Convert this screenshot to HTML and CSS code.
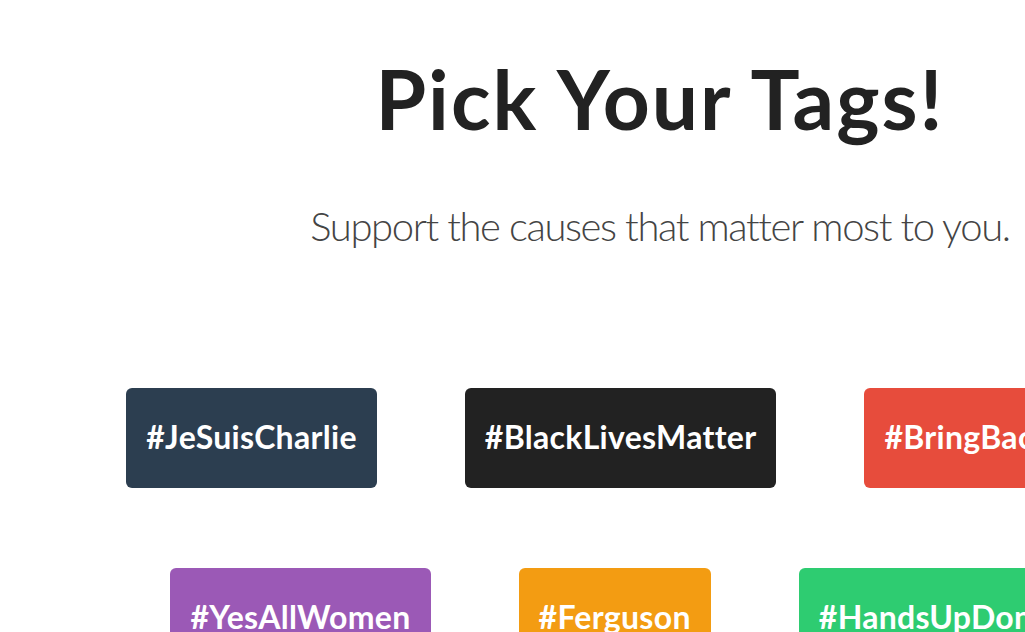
FILE: index.html
```html
<!DOCTYPE html>
<html lang="en">
<head>
<meta charset="utf-8">
<title>Pick Your Tags!</title>
<link rel="stylesheet" href="styles.css">
</head>
<body>
<main class="page">
  <h1 class="title">Pick Your Tags!</h1>
  <p class="subtitle">Support the causes that matter most to you.</p>
  <div class="tags">
    <a class="tag tag-navy" href="#">#JeSuisCharlie</a>
    <a class="tag tag-black" href="#">#BlackLivesMatter</a>
    <a class="tag tag-red" href="#">#BringBackOurGirls</a>
    <a class="tag tag-purple" href="#">#YesAllWomen</a>
    <a class="tag tag-orange" href="#">#Ferguson</a>
    <a class="tag tag-green" href="#">#HandsUpDontShoot</a>
  </div>
</main>
</body>
</html>
```

FILE: styles.css
```css
html, body {
  margin: 0;
  padding: 0;
  background: #ffffff;
  overflow: hidden;
}

body {
  font-family: Lato, "Open Sans", Arial, sans-serif;
}

.page {
  width: 1320px;
  text-align: center;
  padding-top: 49px;
}

.title {
  margin: 0;
  font-size: 82px;
  font-weight: 700;
  line-height: 1.2;
  letter-spacing: 2px;
  color: #222222;
}

.subtitle {
  margin: 55px 0 0;
  font-size: 40px;
  font-weight: 300;
  line-height: 1.2;
  letter-spacing: -1.4px;
  color: #444444;
}

.tags {
  display: flex;
  flex-wrap: wrap;
  justify-content: center;
  column-gap: 88px;
  row-gap: 80px;
  margin-top: 138px;
}

.tag {
  display: flex;
  align-items: center;
  height: 100px;
  padding: 0 20px 3px;
  border-radius: 6px;
  color: #ffffff;
  font-size: 32px;
  font-weight: 700;
  letter-spacing: 0.3px;
  text-decoration: none;
  box-sizing: border-box;
}

.tag-navy { background: #2c3e50; }
.tag-black { background: #222222; }
.tag-red { background: #e74c3c; }
.tag-purple { background: #9b59b6; }
.tag-orange { background: #f39c12; }
.tag-green { background: #2ecc71; }
```
